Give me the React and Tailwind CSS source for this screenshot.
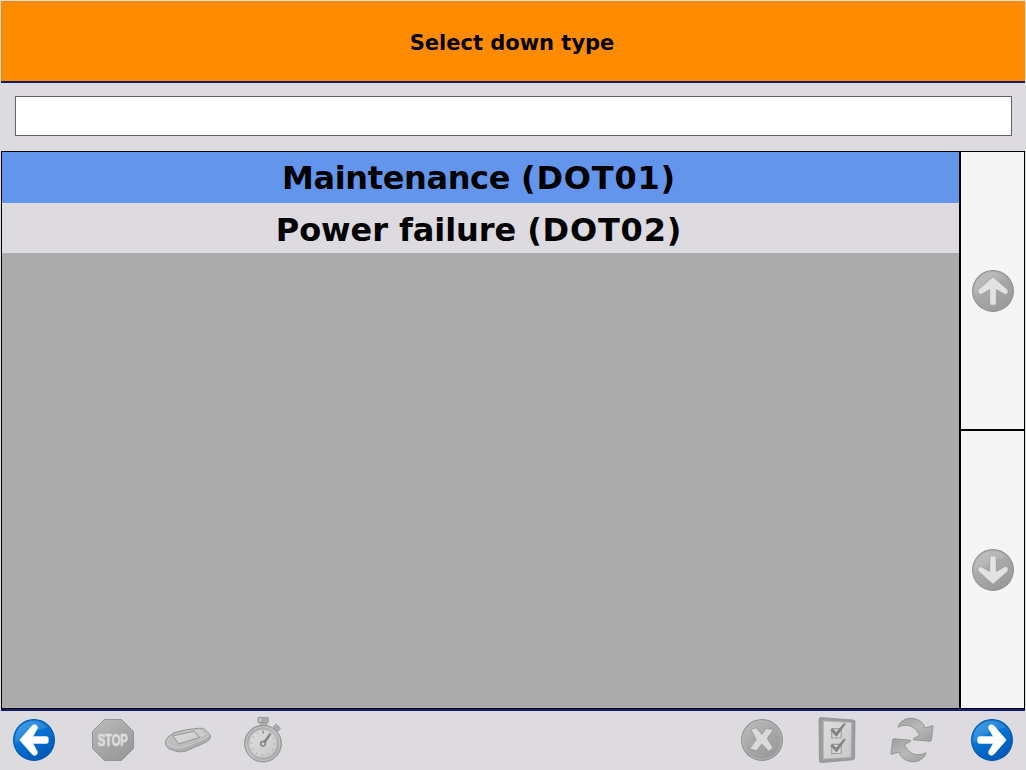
import React, { useState } from "react";

const downTypes = [
  { code: "DOT01", name: "Maintenance", spacing: "tracking-[-0.36px]" },
  { code: "DOT02", name: "Power failure", spacing: "tracking-[-0.08px]" },
];

// Shared gradients for the icons
const IconDefs = () => (
  <svg width="0" height="0" className="absolute">
    <defs>
      <linearGradient id="blue" x1="0" y1="0" x2="0.6" y2="1">
        <stop offset="0" stopColor="#2f9ae8" />
        <stop offset="0.5" stopColor="#0872d2" />
        <stop offset="1" stopColor="#0059b8" />
      </linearGradient>
      <linearGradient id="gray" x1="0" y1="0" x2="0.7" y2="1">
        <stop offset="0" stopColor="#bdbdbd" />
        <stop offset="0.5" stopColor="#a9a9a9" />
        <stop offset="1" stopColor="#999999" />
      </linearGradient>
      <linearGradient id="silver" x1="0" y1="0" x2="0.8" y2="1">
        <stop offset="0" stopColor="#a0a0a0" />
        <stop offset="0.5" stopColor="#b9b9b9" />
        <stop offset="1" stopColor="#a3a3a3" />
      </linearGradient>
      <linearGradient id="light" x1="0" y1="0" x2="1" y2="1">
        <stop offset="0" stopColor="#dedede" />
        <stop offset="1" stopColor="#c8c8c8" />
      </linearGradient>
    </defs>
  </svg>
);

const ArrowIcon = ({ angle = 0, active = false }) => (
  <svg width="42" height="42" viewBox="0 0 42 42" className="block">
    <circle
      cx="21"
      cy="21"
      r="20.4"
      fill={active ? "url(#blue)" : "url(#gray)"}
      stroke={active ? "#0057ae" : "#919191"}
      strokeWidth="1.1"
    />
    <path
      d="M2.5 24A18.6 18.6 0 0 1 35 8.8C27 9 13 15 2.5 24Z"
      fill="#ffffff"
      opacity={active ? 0.12 : 0.1}
    />
    <path
      transform={`rotate(${angle} 21 21)`}
      d="M6.8 21L19 7Q20.5 5.4 22.6 6Q25 6.9 24.2 9.5L19.6 17.7H33.6Q35.2 17.7 35.2 19.2V22.8Q35.2 24.3 33.6 24.3H19.6L24.2 32.5Q25 35.1 22.6 36Q20.5 36.6 19 35Z"
      fill={active ? "#ffffff" : "#e2e2e2"}
      stroke={active ? "#ffffff" : "#989898"}
      strokeWidth={active ? 0.8 : 0.7}
      strokeLinejoin="round"
    />
  </svg>
);

const StopIcon = () => (
  <svg width="48" height="48" viewBox="0 0 48 48" className="overflow-visible">
    <path
      d="M15.5 3.5H32.5L44.5 15.5V32.5L32.5 44.5H15.5L3.5 32.5V15.5Z"
      fill="url(#gray)"
      stroke="#949494"
    />
    <text
      x="8.7"
      y="29.5"
      fontFamily="Liberation Sans, sans-serif"
      fontWeight="700"
      fontSize="15.6"
      textLength="30"
      lengthAdjust="spacingAndGlyphs"
      fill="#dedede"
      stroke="#dedede"
      strokeWidth="0.7"
    >
      STOP
    </text>
  </svg>
);

const TerminalIcon = () => (
  <svg width="48" height="48" viewBox="0 0 48 48">
    <path
      d="M1.5 25.5Q2 21.5 10 16.8Q22 12.8 35.5 12.2Q39 12 40.5 13.2L45.5 18.2Q47.5 20.5 45.5 23.5Q43 26 37 28.5L22 35Q18 36.5 13 35.5L6 33.3Q1 31 1.5 25.5Z"
      fill="url(#silver)"
      stroke="#959595"
    />
    <path
      d="M2.8 25.5Q3.5 22 10.7 18Q23 14 35.5 13.4Q38.5 13.2 40 14.5L44.5 18.5Q45.5 20 41 22.5L22 30.5Q17 32.5 12 31.7L6 29.5Q2.5 28.5 2.8 25.5Z"
      fill="#bdbdbd"
      stroke="#d2d2d2"
      strokeWidth="0.7"
    />
    <path d="M9 19.8L30.2 15.3L35.5 21.5L14.7 28Z" fill="url(#light)" stroke="#909090" strokeWidth="0.9" />
    <path d="M31.8 15.2L36.5 14.6L41 18.5L36.2 20.2Z" fill="#c9c9c9" stroke="#e0e0e0" strokeWidth="0.7" />
    <path d="M24.5 26L31.5 23.7L32.8 24.8L26 27.5Z" fill="#d9d9d9" stroke="#969696" strokeWidth="0.6" />
  </svg>
);

const TimerIcon = () => (
  <svg width="48" height="48" viewBox="0 0 48 48">
    <path d="M21.4 6H27.6V10H21.4Z" fill="#b6b6b6" stroke="#999999" strokeWidth="0.8" />
    <rect x="19" y="1.4" width="10.4" height="5.3" rx="0.8" fill="#aaaaaa" stroke="#919191" strokeWidth="0.9" />
    <path d="M21 2V6" stroke="#cfcfcf" strokeWidth="1.6" />
    <g transform="rotate(43 37.5 12)">
      <rect x="36" y="13" width="3.4" height="3.5" fill="#b3b3b3" />
      <rect x="34.3" y="9.4" width="6.4" height="4.2" rx="0.6" fill="#acacac" stroke="#949494" strokeWidth="0.8" />
    </g>
    <circle cx="24" cy="27.6" r="18.4" fill="url(#silver)" stroke="#939393" />
    <circle cx="24" cy="27.6" r="16.8" fill="none" stroke="#cbcbcb" strokeWidth="0.8" />
    <circle cx="24" cy="27.6" r="14.2" fill="url(#light)" stroke="#b0b0b0" strokeWidth="0.7" />
    <circle
      cx="24"
      cy="27.6"
      r="11.6"
      fill="none"
      stroke="#9b9b9b"
      strokeWidth="1.6"
      strokeDasharray="0.9 5.174"
    />
    <path d="M24 14.8V17.4" stroke="#999999" strokeWidth="2" />
    <path d="M24.8 25.4L31 17.2L32 18.2L26.4 26.8Z" fill="#7f7f7f" stroke="#7f7f7f" strokeWidth="0.7" />
    <circle cx="24" cy="27.8" r="2.3" fill="#d7d7d7" stroke="#808080" strokeWidth="1.5" />
  </svg>
);

const CancelIcon = () => (
  <svg width="48" height="48" viewBox="0 0 48 48">
    <circle cx="24" cy="24" r="20.4" fill="url(#gray)" stroke="#919191" strokeWidth="1.1" />
    <circle cx="24" cy="24" r="19.2" fill="none" stroke="#b9b9b9" strokeWidth="0.8" />
    <path
      d="M14.5 12.9L17.3 12Q18.6 11.8 19.4 12.9L23.9 18.4L27.4 13.4Q28.2 12.4 29.4 12.6L34 13.3Q35.2 13.7 34.6 14.9L29.2 22.4L34.5 31Q35 32.1 34.1 32.8L31.6 34.5Q30.5 35 29.6 34L23.7 28.2L19.3 33.8Q18.4 34.9 17.2 34.5L13 33.3Q11.8 32.8 12.5 31.6L18.2 23.6L13.5 14.8Q13 13.5 14.5 12.9Z"
      fill="#dadada"
      stroke="#949494"
      strokeWidth="0.8"
    />
  </svg>
);

const ChecklistIcon = () => (
  <svg width="48" height="48" viewBox="0 0 48 48">
    <path
      d="M8 1.6L40.5 4Q42 4.3 42 6L41.5 42Q41.4 43.6 40 43.8L8.5 46.6Q6.5 46.7 6.4 44.8L6 3.5Q6.2 1.5 8 1.6Z"
      fill="#9d9d9d"
      stroke="#8e8e8e"
      strokeWidth="0.8"
    />
    <path d="M10.4 5L38.5 6.6L37.9 41.2L10.4 42.9Z" fill="url(#light)" stroke="#b5b5b5" strokeWidth="0.7" />
    <g id="check">
      <path d="M18.8 12.6L28.2 12.8V21.7L18.8 22Z" fill="#d8d8d8" stroke="#999999" strokeWidth="1.1" />
      <path
        d="M17.8 14.2L20 13.3L23.1 16.7L31.3 7.3L32.3 8L23.5 20.4Z"
        fill="#828282"
        stroke="#828282"
        strokeWidth="0.9"
      />
    </g>
    <use href="#check" y="15.6" />
  </svg>
);

const RefreshIcon = () => (
  <svg width="48" height="48" viewBox="0 0 48 48">
    <path
      id="turn"
      d="M10 11.2C12 4.5 19 1.6 24 2.3C31 3 35.5 7 37.2 12L44.3 9.8Q45.3 9.6 45.1 10.7L43.2 24.2Q43 25.4 41.8 25.2L25.8 23.8Q24.4 23.4 25.6 22.5L31.4 19.3C29 13.8 24.5 9.8 19.5 9.4C16 9 13 9.8 10 11.2Z"
      fill="url(#silver)"
      stroke="#8e8e8e"
      strokeWidth="0.9"
      strokeLinejoin="round"
    />
    <use href="#turn" transform="rotate(180 24 24)" />
  </svg>
);

const ToolButton = ({ children }) => (
  <button className="flex h-12 w-[74px] items-center justify-center">{children}</button>
);

const App = () => {
  const [search, setSearch] = useState("");
  const [selected, setSelected] = useState("DOT01");

  return (
    <div className="flex h-[770px] w-[1026px] flex-col border-x border-t border-[#d9dbdc] bg-[#dddbe0] font-['DejaVu_Sans',sans-serif] text-black">
      <IconDefs />
      <header className="flex h-[82px] shrink-0 items-center justify-center border-b-2 border-[#191970] bg-[#ff8c00] pr-0.5 pt-1.5">
        <h1 className="text-[21px] font-bold">Select down type</h1>
      </header>

      <div className="h-[68px] shrink-0 px-[14px] pr-[13px] pt-[13px]">
        <input
          value={search}
          onChange={(e) => setSearch(e.target.value)}
          className="block h-10 w-[997px] border border-[#646464] bg-white px-2 outline-none"
        />
      </div>

      <main className="flex h-[558px] shrink-0 border border-black">
        <div className="flex-1 bg-[#ababab]">
          {downTypes.map((type) => (
            <div
              key={type.code}
              onClick={() => setSelected(type.code)}
              className={`flex items-center justify-center gap-[11px] whitespace-nowrap pr-[3px] text-[32px] font-bold first:h-[51px] first:pt-px last:h-[50px] last:pt-1 ${
                selected === type.code ? "bg-[#6495ed]" : "bg-[#dddbe0]"
              }`}
            >
              <span className={type.spacing}>{type.name}</span>
              <span className="tracking-[0.8px]">({type.code})</span>
            </div>
          ))}
        </div>
        <div className="flex w-[65px] flex-col border-l-2 border-black bg-[#f5f5f5]">
          <button className="flex h-[279px] items-center justify-center border-b-2 border-black">
            <ArrowIcon angle={90} />
          </button>
          <button className="flex flex-1 items-center justify-center">
            <ArrowIcon angle={-90} />
          </button>
        </div>
      </main>

      <footer className="flex flex-1 items-center justify-between border-t-2 border-[#191970] px-3 pb-0.5">
        <div className="flex items-center">
          <button>
            <ArrowIcon active />
          </button>
          <div className="ml-[21px] flex gap-px">
            <ToolButton>
              <StopIcon />
            </ToolButton>
            <ToolButton>
              <TerminalIcon />
            </ToolButton>
            <ToolButton>
              <TimerIcon />
            </ToolButton>
          </div>
        </div>
        <div className="flex items-center">
          <div className="mr-[22px] flex gap-px">
            <ToolButton>
              <CancelIcon />
            </ToolButton>
            <ToolButton>
              <ChecklistIcon />
            </ToolButton>
            <ToolButton>
              <RefreshIcon />
            </ToolButton>
          </div>
          <button>
            <ArrowIcon angle={180} active />
          </button>
        </div>
      </footer>
    </div>
  );
};

export default App;
